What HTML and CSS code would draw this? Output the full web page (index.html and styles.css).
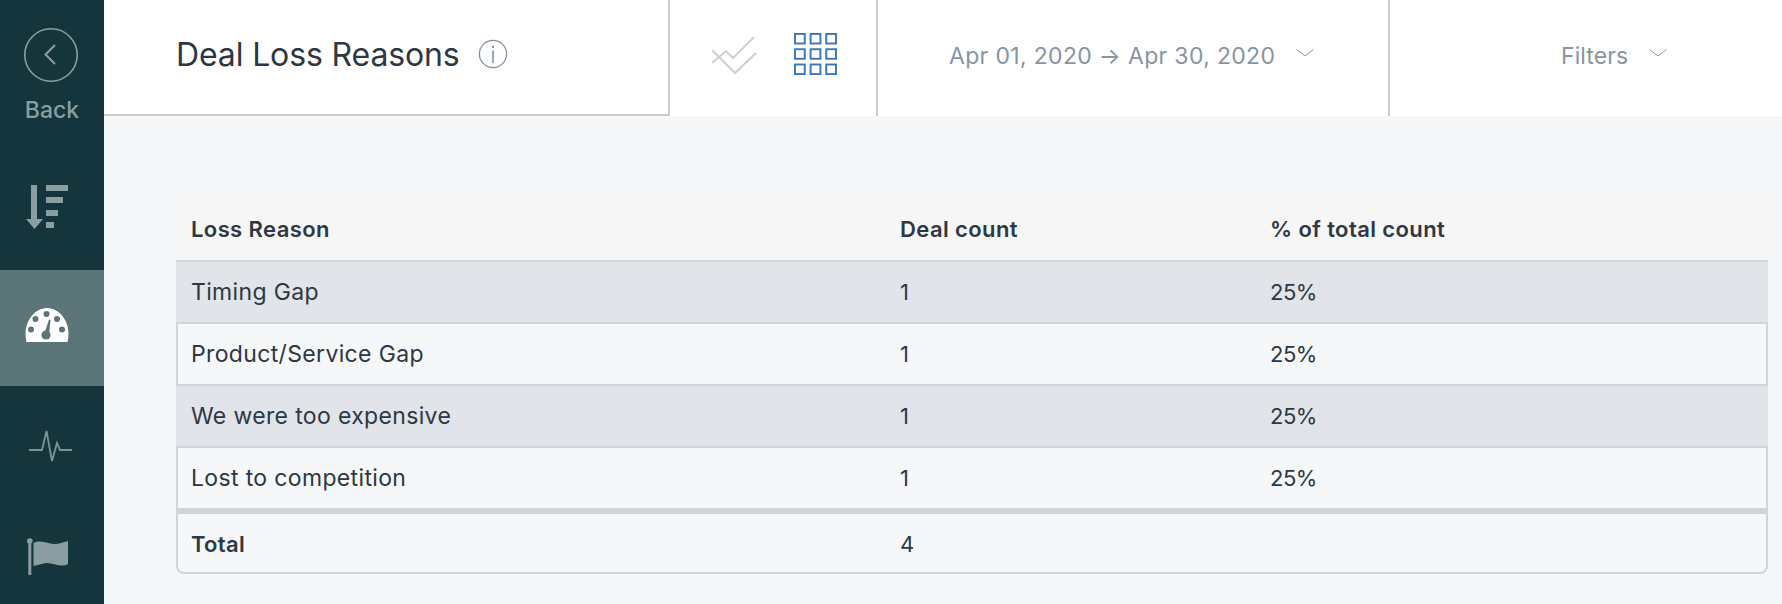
FILE: index.html
```html
<!DOCTYPE html>
<html lang="en">
<head>
  <meta charset="UTF-8" />
  <title>Deal Loss Reasons</title>
  <link rel="stylesheet" href="styles.css">
</head>
<body>

<nav class="sidebar">
  <div class="side-item back">
    <svg class="back-icon" width="56" height="56" viewBox="0 0 56 56">
      <circle cx="28" cy="28" r="26.2" fill="none" stroke="#8a9ea2" stroke-width="1.6"/>
      <path d="M32 18 L22.5 27.5 L32 37" fill="none" stroke="#8a9ea2" stroke-width="2"/>
    </svg>
    <span>Back</span>
  </div>
  <div class="side-item sort">
    <svg width="42" height="44" viewBox="0 0 42 44">
      <path d="M5 0h6v34h6L8.500 44 0 34h5z" fill="#8a9ea2"/>
      <path d="M20 0h22v6H20zM20 12h17v6H20zM20 25h12v6H20zM20 37h8v6h-8z" fill="#8a9ea2"/>
    </svg>
  </div>
  <div class="side-item active">
    <svg width="44" height="36" viewBox="0 0 44 36">
      <path d="M1.500 35 C-3 16 9 1 22 1 C35 1 47 16 42.500 35z" fill="#fff"/>
      <g fill="#5b7578">
        <circle cx="21.500" cy="7" r="3"/>
        <circle cx="10.500" cy="12" r="3"/>
        <circle cx="32" cy="12" r="3"/>
        <circle cx="6" cy="22.500" r="3"/>
        <circle cx="37" cy="22.500" r="3"/>
        <circle cx="21" cy="28" r="4.600"/>
        <path d="M19.500 26 L24 12.500 L25.500 13 L24 28z"/>
      </g>
    </svg>
  </div>
  <div class="side-item pulse">
    <svg width="44" height="32" viewBox="0 0 44 32">
      <path d="M0 20 H13 L17.500 1 L23 31 L28 13 L31 20 H43" fill="none" stroke="#7b9498" stroke-width="1.800"/>
    </svg>
  </div>
  <div class="side-item flag">
    <svg width="42" height="38" viewBox="0 0 42 38">
      <circle cx="2.800" cy="3" r="2.800" fill="#8a9ea2"/>
      <path d="M1.300 3h3v34h-3z" fill="#8a9ea2"/>
      <path d="M6.500 5 C16 0 24 9 34 5 L41 3 V26 C32 31 24 22 15 26 L6.500 28z" fill="#8a9ea2"/>
    </svg>
  </div>
</nav>

<div class="main">
  <header class="topbar">
    <div class="title-box">
      <h1>Deal Loss Reasons</h1>
      <svg class="info" width="30" height="30" viewBox="0 0 30 30">
        <circle cx="15" cy="15" r="13.600" fill="none" stroke="#8492a3" stroke-width="1.300"/>
        <path d="M14.200 11.500h1.600V24h-1.600zM14.100 6.500h1.800v2.500h-1.800z" fill="#8492a3"/>
      </svg>
    </div>
    <div class="view-box">
      <svg class="check-icon" width="46" height="40" viewBox="0 0 46 40">
        <path d="M1 14 L24 37 L45 17" fill="none" stroke="#cfcfcf" stroke-width="2"/>
        <path d="M1 27 L15 15 L22 22 L43 1" fill="none" stroke="#cfcfcf" stroke-width="2"/>
      </svg>
      <svg class="grid-icon" width="43" height="42" viewBox="0 0 44 44" preserveAspectRatio="none">
        <g fill="none" stroke="#3d78b8" stroke-width="2">
          <rect x="1" y="1" width="10" height="10"/><rect x="17" y="1" width="10" height="10"/><rect x="33" y="1" width="10" height="10"/>
          <rect x="1" y="17" width="10" height="10"/><rect x="17" y="17" width="10" height="10"/><rect x="33" y="17" width="10" height="10"/>
          <rect x="1" y="33" width="10" height="10"/><rect x="17" y="33" width="10" height="10"/><rect x="33" y="33" width="10" height="10"/>
        </g>
      </svg>
    </div>
    <div class="date-box">
      <span>Apr 01, 2020 → Apr 30, 2020</span>
      <svg class="chev" width="18" height="8" viewBox="0 0 18 8"><path d="M0.500 0.500 L9 7 L17.500 0.500" fill="none" stroke="#8a94a0" stroke-width="1"/></svg>
    </div>
    <div class="filter-box">
      <span>Filters</span>
      <svg class="chev" width="18" height="8" viewBox="0 0 18 8"><path d="M0.500 0.500 L9 7 L17.500 0.500" fill="none" stroke="#8a94a0" stroke-width="1"/></svg>
    </div>
  </header>

  <div class="content">
    <table class="report">
      <thead>
        <tr><th>Loss Reason</th><th>Deal count</th><th>% of total count</th></tr>
      </thead>
      <tbody>
        <tr class="odd"><td>Timing Gap</td><td class="num">1</td><td class="num">25%</td></tr>
        <tr class="even"><td>Product/Service Gap</td><td class="num">1</td><td class="num">25%</td></tr>
        <tr class="odd"><td>We were too expensive</td><td class="num">1</td><td class="num">25%</td></tr>
        <tr class="even last"><td>Lost to competition</td><td class="num">1</td><td class="num">25%</td></tr>
      </tbody>
      <tfoot>
        <tr class="total"><td>Total</td><td class="num">4</td><td></td></tr>
      </tfoot>
    </table>
  </div>
</div>

</body>
</html>
```

FILE: styles.css
```css
* {
  box-sizing: border-box;
}

html, body {
  height: 604px;
  overflow: hidden;
}

body {
  margin: 0;
  display: flex;
  font-family: Inter, 'Noto Sans', sans-serif;
  background: #f5f7f9;
  color: #2d3843;
}

/* left nav */
.sidebar {
  width: 104px;
  flex-shrink: 0;
  background: #15353d;
  display: flex;
  flex-direction: column;
}

.side-item {
  height: 116px;
  flex-shrink: 0;
  display: flex;
  justify-content: center;
}

.side-item svg {
  overflow: visible;
}

.side-item.back {
  height: 154px;
  flex-direction: column;
  align-items: center;
  justify-content: flex-start;
  padding-top: 27px;
  color: #8a9ea2;
  font-size: 23px;
  font-weight: 500;
}

.back-icon {
  margin-right: 2px;
}

.back span {
  margin-top: 13px;
}

.sort {
  padding: 31px 11px 0 0;
}

.active {
  background: #5b7578;
  padding: 37px 11px 0 0;
}

.pulse {
  padding: 44px 2px 0 0;
}

.flag {
  padding: 36px 9px 0 0;
}

/* top bar */
.main {
  flex: 1;
  min-width: 0;
}

.topbar {
  height: 116px;
  display: flex;
  background: #fff;
  color: #8a94a0;
  font-size: 23px;
}

.title-box {
  width: 566px;
  display: flex;
  align-items: center;
  padding: 0 0 6px 72px;
  border-right: 2px solid #cccccc;
  border-bottom: 2px solid #cccccc;
}

h1 {
  margin: 0;
  font-size: 32px;
  font-weight: 400;
  letter-spacing: -0.13px;
  color: #2d3843;
}

.info {
  margin-left: 18px;
}

.view-box {
  width: 208px;
  display: flex;
  align-items: center;
  padding: 0 0 8px 41px;
  border-right: 2px solid #cccccc;
}

.check-icon {
  margin-top: 4px;
}

.grid-icon {
  margin: 0 0 0 37px;
}

.date-box {
  width: 512px;
  display: flex;
  align-items: center;
  padding: 0 0 4px 71px;
  border-right: 2px solid #cccccc;
  letter-spacing: 0.33px;
}

.filter-box {
  flex: 1;
  display: flex;
  align-items: center;
  padding: 0 0 4px 171px;
  letter-spacing: 0.1px;
}

.chev {
  margin: 0 0 7px 21px;
}

/* table */
.content {
  padding: 84px 14px 0 72px;
}

.report {
  width: 100%;
  border-collapse: separate;
  border-spacing: 0;
  table-layout: fixed;
  font-size: 23px;
  letter-spacing: 0.35px;
}

.report th,
.report td {
  text-align: left;
  padding: 0 0 1px 15px;
}

.report th:first-child { width: 709px; }
.report th:nth-child(2) { width: 370px; }

.report th {
  height: 62px;
  padding-bottom: 2px;
  font-size: 22px;
  font-weight: 600;
  letter-spacing: 0.4px;
  background: #f6f6f6;
  border-bottom: 2px solid #d0d5dc;
}

.report th:first-child { border-top-left-radius: 8px; }
.report th:last-child { border-top-right-radius: 8px; }

.report td {
  height: 62px;
  border-bottom: 2px solid #d0d5dc;
}

.report td.num {
  font-size: 22px;
  letter-spacing: -0.5px;
}

.odd td {
  background: #e1e4e9;
}

.even td:first-child,
.total td:first-child {
  border-left: 2px solid #d0d5dc;
  padding-left: 13px;
}

.even td:last-child,
.total td:last-child {
  border-right: 2px solid #d0d5dc;
}

.report .last td {
  border-bottom: 6px solid #d0d5dc;
  height: 66px;
}

.report .total td {
  height: 60px;
  padding-bottom: 0;
  padding-top: 1px;
  font-weight: 400;
}

.total td:first-child {
  font-size: 22px;
  font-weight: 600 !important;
  letter-spacing: 0.3px;
  border-bottom-left-radius: 8px;
}

.total td:last-child {
  border-bottom-right-radius: 8px;
}
```
